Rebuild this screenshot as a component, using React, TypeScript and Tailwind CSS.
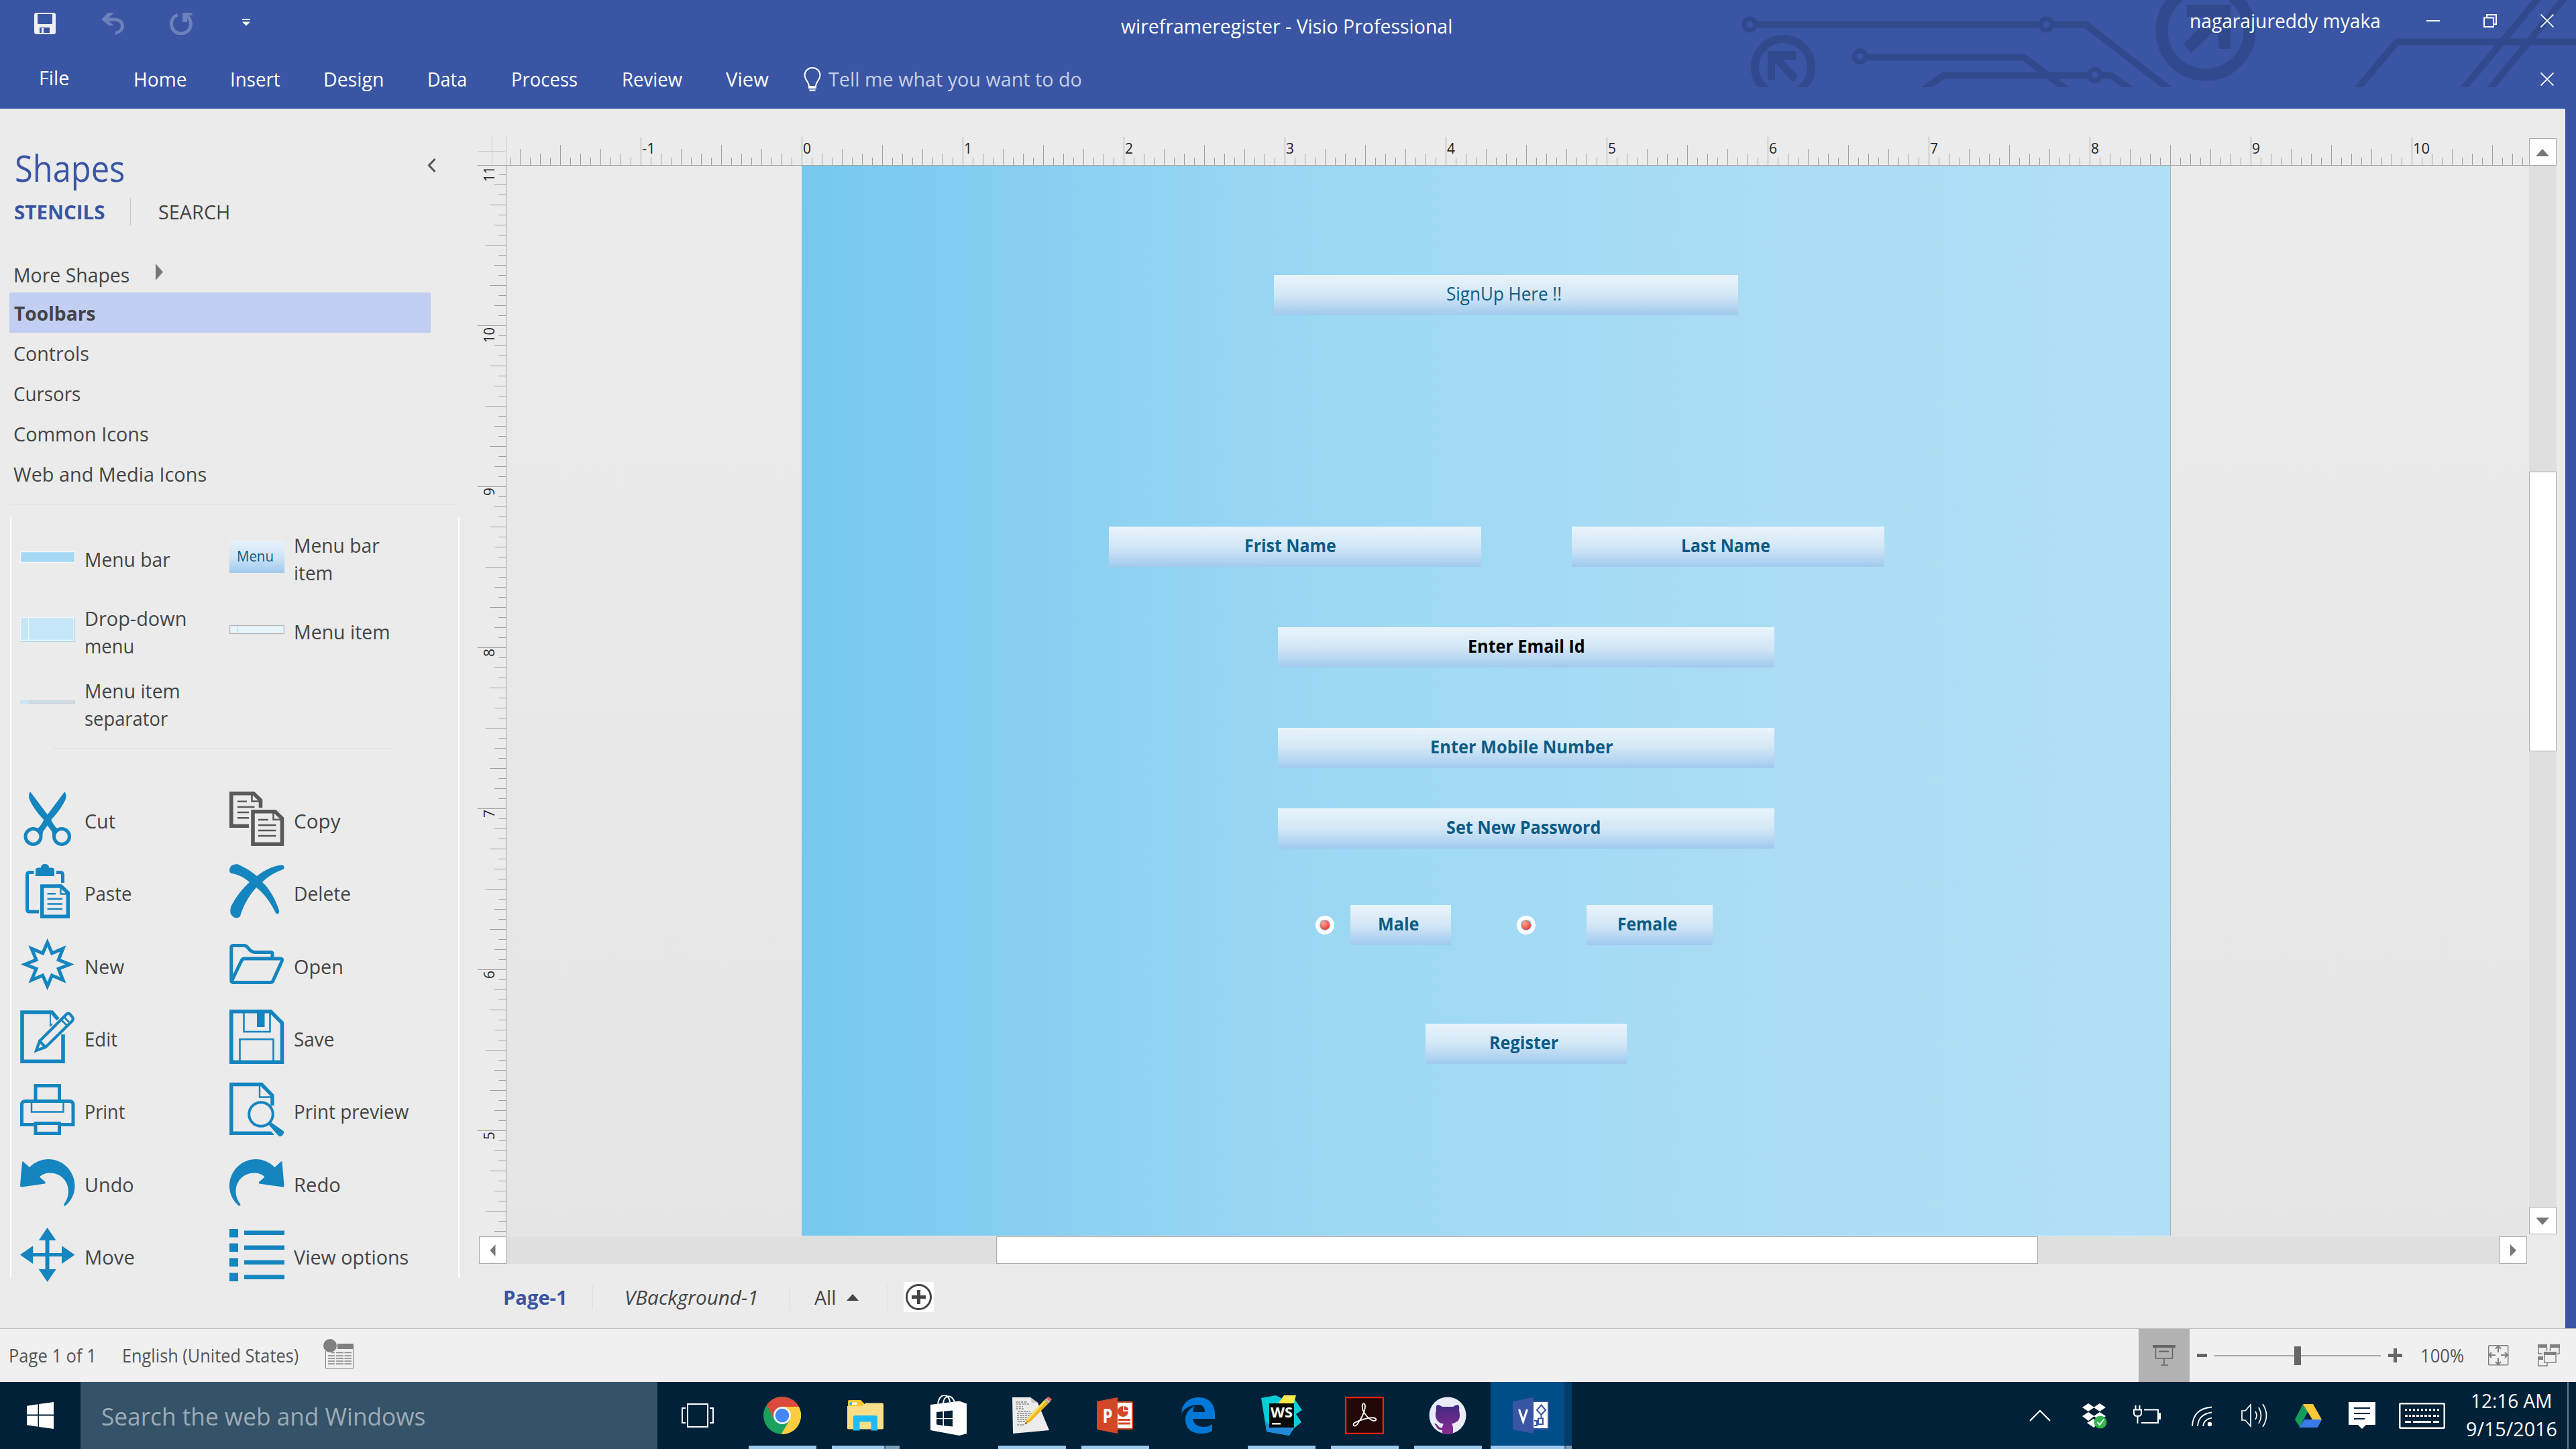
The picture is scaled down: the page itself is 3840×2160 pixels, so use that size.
import { useLayoutEffect, useRef, useState, type ReactNode } from "react";

/** Text squeezed or stretched horizontally to an exact advance width. */
function T({ w, className = "", children }: { w: number; className?: string; children: string }) {
  const ref = useRef<HTMLSpanElement>(null);
  const [scale, setScale] = useState(1);
  useLayoutEffect(() => {
    if (ref.current) setScale((w - 2.5) / ref.current.offsetWidth);
  }, [w]);
  return (
    <span className={`block shrink-0 whitespace-nowrap pl-[1.25px] ${className}`} style={{ width: w }}>
      <span ref={ref} className="inline-block origin-left" style={{ transform: `scaleX(${scale})` }}>
        {children}
      </span>
    </span>
  );
}

function Svg({ w, h, className = "", children }: { w: number; h: number; className?: string; children: ReactNode }) {
  return (
    <svg width={w} height={h} viewBox={`0 0 ${w} ${h}`} fill="none" className={`block shrink-0 ${className}`}>
      {children}
    </svg>
  );
}

/* ---------- Title bar ---------- */

function Circuit() {
  return (
    <svg width="1340" height="130" viewBox="2500 0 1340 130" fill="none" className="absolute top-0 left-[2500px]">
      <g stroke="#31498d" strokeWidth="10" strokeLinejoin="round">
        <path d="M2620 36.500H3040M3061 36.500H3109L3235 134" />
        <circle cx="2608.500" cy="36.500" r="8.500" strokeWidth="7" />
        <circle cx="3050.500" cy="36.500" r="8.500" strokeWidth="7" />
        <path d="M2784 85.500H3017L3084 136" />
        <circle cx="2772.500" cy="84" r="8.500" strokeWidth="7" />
        <path d="M2864 136L2897 112.500H3112M3134 112.500H3147L3180 136" />
        <circle cx="3123" cy="112" r="8.500" strokeWidth="7" />
        <circle cx="2658" cy="100" r="42" strokeWidth="12" />
        <circle cx="3288" cy="46" r="65.500" strokeWidth="18" />
        <path d="M3510 137L3573 62.500H3840" />
        <path d="M3668 137L3784 -3M3708 137L3823 -3" />
      </g>
      <path fill="#31498d" d="M2635 76H2677V89H2656.500L2680 113L2673.500 123L2646 93.500V119.500H2635Z" />
      <path fill="#31498d" d="M3260 7H3325V73H3307V40L3266.500 79L3255 66L3294.500 25H3260Z" />
    </svg>
  );
}

function CloseX() {
  return (
    <Svg w={20} h={20}>
      <path d="M0.500 0.500L19.500 19.500M19.500 0.500L0.500 19.500" stroke="#fff" strokeWidth="1.800" />
    </Svg>
  );
}

function Header() {
  return (
    <header className="relative h-[162px] shrink-0 bg-[#3955a3] text-[29px] leading-[40px] text-white">
      <Circuit />
      <div className="relative flex h-[62px] items-center">
        <Svg w={32} h={32} className="mt-2 ml-[51px]">
          <path fill="#f0f0f0" fillRule="evenodd" d="M2 0H30L32 2V30L30 32H2L0 30V2ZM5 2V16L6 17H26L27 16V2ZM8 22V30H11V23H14V30H23V22Z" />
        </Svg>
        <Svg w={34} h={33} className="mt-2 ml-[68px]">
          <path fill="#6c80bc" d="M10 0H19L11 7.500H19C29 7.500 34 13 34 20C34 26 29 31 21 33V28C26 27 29 24 29 20C29 15 25 12.500 19 12.500H11L19 19H11L0 10Z" />
        </Svg>
        <Svg w={35} h={33} className="mt-2 ml-[67px]">
          <path d="M13 3A14.500 14.500 0 1 0 25 4" stroke="#6c80bc" strokeWidth="5" />
          <path fill="#6c80bc" d="M20 0H33L36 4H27V14H20Z" />
        </Svg>
        <Svg w={12} h={11} className="mt-1 ml-[74px]">
          <path fill="#fff" d="M0 0H12V2H0ZM0 4.500H12L6 10.500Z" />
        </Svg>
        <T w={497} className="mt-[15px] ml-[1297px]">wireframeregister - Visio Professional</T>
        <T w={287} className="ml-[1096px]">nagarajureddy myaka</T>
        <div className="ml-[67px] h-[2px] w-[20px] bg-white" />
        <Svg w={20} h={20} className="ml-[65px]">
          <path d="M1 5.500H15V19H1ZM5 5V1H19V15H15.500" stroke="#fff" strokeWidth="2" />
        </Svg>
        <div className="ml-[65px]">
          <CloseX />
        </div>
      </div>
      <div className="relative flex h-[100px] items-center pt-[12px]">
        <T w={48} className="mb-1 ml-[57px]">File</T>
        <T w={82} className="ml-[93px]">Home</T>
        <T w={77} className="ml-[62px]">Insert</T>
        <T w={93} className="ml-[62px]">Design</T>
        <T w={62} className="ml-[62px]">Data</T>
        <T w={102} className="ml-[63px]">Process</T>
        <T w={93} className="ml-[63px]">Review</T>
        <T w={66} className="ml-[62px]">View</T>
        <Svg w={26} h={37} className="ml-[51px]">
          <path d="M8 29C8 22 1.500 19 1.500 12A11.500 11 0 0 1 24.500 12C24.500 19 18 22 18 29Z" stroke="#fff" strokeWidth="2" />
          <path fill="#fff" d="M7 28H19V32H7ZM8.500 33.500H17.500V36H8.500Z" />
        </Svg>
        <T w={380} className="ml-[10px] text-[#c6cfe6]">Tell me what you want to do</T>
        <div className="mr-[33px] ml-auto">
          <CloseX />
        </div>
      </div>
    </header>
  );
}

/* ---------- Shapes panel ---------- */

const BLUE = "#1585bf";

function StencilIcon({ name }: { name: string }) {
  const page = "#ebebeb";
  switch (name) {
    case "menubar":
      return (
        <Svg w={82} h={81}>
          <rect x="0.500" y="32.500" width="81" height="16" fill="#a4d8f3" stroke="#f4f8fa" strokeWidth="1.500" />
        </Svg>
      );
    case "menubaritem":
      return (
        <div className="flex h-[81px] w-[82px] shrink-0 items-center">
          <div className="flex h-[48px] w-[82px] items-center justify-center bg-linear-to-b from-[#e6f2fb] via-[#d0e4f6] to-[#9ecaee] pr-[5px] pb-[2px] text-[21px] leading-[30px] text-[#0b5c85]">
            <T w={57}>Menu</T>
          </div>
        </div>
      );
    case "dropdown":
      return (
        <Svg w={82} h={81}>
          <rect x="0" y="22" width="82" height="37" fill="#c5e6f7" />
          <path d="M0.500 58V22.500H80V56.500H0.500M12.500 23V56" stroke="#eef7fc" strokeWidth="1.300" />
          <path d="M1 58.500H81.500V23" stroke="#a9d6ee" />
        </Svg>
      );
    case "menuitem":
      return (
        <Svg w={82} h={81}>
          <rect x="0.500" y="34.500" width="81" height="12" fill="#e7f4fc" stroke="#b4b4b8" strokeWidth="1.300" />
          <path d="M12 35V46" stroke="#a4d8f3" />
        </Svg>
      );
    case "separator":
      return (
        <Svg w={82} h={81}>
          <rect x="0.500" y="38.500" width="81" height="4" fill="#e2e6ea" stroke="#d2d2d2" />
          <rect x="0" y="38" width="12" height="5" fill="#c5e6f7" />
          <path d="M13 40.500H82" stroke="#7cc0e4" />
        </Svg>
      );
    case "cut": {
      const half = "M15 0C12.500 4 12.500 8 14 12C20 25 28 34 36 43L30 53L34 60L41 50L50 62L56 56C52 52 49 48 46.500 43C47 42 42 35 40.500 34Z";
      return (
        <Svg w={82} h={81}>
          <g fill={BLUE}>
            <path d={half} />
            <path d={half} transform="matrix(-1 0 0 1 81.5 0)" />
          </g>
          <path d="M30 53C33 57 31 63 30.500 66M51.500 53C48.500 57 50.500 63 51 66" stroke={BLUE} strokeWidth="5" />
          <ellipse cx="19.500" cy="67" rx="11.500" ry="11.500" stroke={BLUE} strokeWidth="5" fill={page} />
          <ellipse cx="62" cy="67" rx="11.500" ry="11.500" stroke={BLUE} strokeWidth="5" fill={page} />
        </Svg>
      );
    }
    case "copy":
      return (
        <Svg w={82} h={81}>
          <g stroke="#595959">
            <path d="M29 51.300H2.800V2.800H36L46.500 13V24" strokeWidth="5.600" />
            <path d="M35 29.800H68L78.500 40V78.300H35Z" strokeWidth="5.600" />
            <path d="M33.500 4V14.500H47M65.500 31V41.800H78M12 14.700H26M12 23H37.500M12 31H29M12 39.300H29M43 42H58M43 50H69.500M43 58H69.500M43 66H69.500" strokeWidth="2.600" />
          </g>
        </Svg>
      );
    case "paste":
      return (
        <Svg w={82} h={81}>
          <path fill={BLUE} d="M23 18V9Q23 5.500 27 5.500H31Q31 0 37 0Q43 0 43 5.500H47Q51 5.500 51 9V18Z" />
          <g stroke={BLUE}>
            <path d="M20.500 12.500H14Q10.500 12.500 10.500 16V68Q10.500 71 14 71H28M54 12.500H60Q63.500 12.500 63.500 16V28" strokeWidth="5" />
            <path d="M32.700 33H61L71.300 43V78.300H32.700Z" strokeWidth="5.400" />
            <path d="M60.500 34V44.500H72M40.600 44.300H53M40.600 52H63M40.600 59.500H63M40.600 67H63" strokeWidth="2.400" />
          </g>
        </Svg>
      );
    case "delete":
      return (
        <Svg w={82} h={81}>
          <path fill={BLUE} d="M0 9C0 3 6 -1 13 0.500C23 5 33 11 41 18C52 9 65 3 77 1.500C82 1 83 6 80 8C68 12 57 19 49 27C61 38 69 54 74 69C75 75 71 75.500 69 73C62 58 52 44 40 35C29 47 20 63 16 78C13 81.500 8 81.500 4 77C0 73 1 67 3 62C9 50 19 37 30 27C22 20 12 15 3 14C1 13 0 12 0 9Z" />
        </Svg>
      );
    case "new":
      return (
        <Svg w={82} h={81}>
          <path
            d="M40.600 8L47.500 24L64 17L57.200 33.800L74 40.500L57.200 47.200L64 64L47.500 57L40.600 73L33.700 57L17 64L24 47.200L7.500 40.500L24 33.800L17 17L33.700 24Z"
            stroke={BLUE}
            strokeWidth="5"
            strokeMiterlimit="10"
          />
        </Svg>
      );
    case "open":
      return (
        <Svg w={82} h={81}>
          <path
            d="M2.800 64V15.500Q2.800 12.500 6 12.500H22C29 12.500 28 22.500 38 22.500H61Q64 22.500 64 25V32M3 66L18 35Q19.500 32 22.500 32H76Q79.500 32 78.500 35L65 65Q64 67.500 61 67.500H5Q2.500 67.500 3 64"
            stroke={BLUE}
            strokeWidth="5"
          />
        </Svg>
      );
    case "edit":
      return (
        <Svg w={82} h={81}>
          <g stroke={BLUE}>
            <path d="M56.500 14.500L47.500 4H3V77.300H64V37" strokeWidth="5.600" />
            <path d="M45 5V24L48 21" strokeWidth="1.800" />
            <path d="M24 61L29 47L69 7Q72 4 75 7.500L78 11.500Q80 14 77.500 17L38 56ZM29 47L38 56" strokeWidth="4.200" />
            <path d="M61 15L70 24M65.500 11L74 20" strokeWidth="2.600" />
          </g>
        </Svg>
      );
    case "save":
      return (
        <Svg w={82} h={81}>
          <g stroke={BLUE}>
            <path d="M2.800 2.800H61.500L78.500 20V78.200H2.800Z" strokeWidth="5.600" />
            <path d="M21.500 4V33H60.500V4M15.500 78V44.300H65.500V78" strokeWidth="2.600" />
          </g>
          <rect x="41" y="3" width="11.500" height="23" fill={BLUE} />
        </Svg>
      );
    case "print":
      return (
        <Svg w={82} h={81}>
          <g stroke={BLUE} strokeWidth="5">
            <path d="M23 27V5.500H58.500V27M21 63.500H2.500V34Q2.500 28.500 8 28.500H73Q79 28.500 79 34V63.500H60" />
            <path d="M23 61.500H58.500V76.500H23Z" />
            <path d="M17 30V44.500H64.500V30" strokeWidth="2.500" />
          </g>
        </Svg>
      );
    case "preview":
      return (
        <Svg w={82} h={81}>
          <g stroke={BLUE}>
            <path d="M64 35V20L48 3.500H2.800V76.200H66" strokeWidth="5.400" />
            <path d="M45 5V22.500H62" strokeWidth="2.400" />
          </g>
          <path d="M58 60L78 82" stroke={page} strokeWidth="12" />
          <circle cx="47" cy="48" r="17.800" stroke={BLUE} strokeWidth="4" fill={page} />
          <path fill={BLUE} d="M58 63L62 60L80.500 73Q82 75 80 78L77.500 80.500Q75 82 73 80Z" />
        </Svg>
      );
    case "undo":
    case "redo":
      return (
        <Svg w={82} h={81}>
          <path
            fill={BLUE}
            transform={name === "redo" ? "matrix(-1 0 0 1 81.5 0)" : undefined}
            d="M3 10Q4 8.500 5 10L14 18C22 10 32 6 42 6C64 6 81.500 24 81.500 46C81.500 58 76 68 68 75Q65 76.500 65 73.500C70 67 72 60 72 54C72 39 61 26.500 44 26.500C38 26.500 32 29 29 32.500L37.500 40Q38 42 37 42.500L2 47.500Q0 47.500 0 45Z"
          />
        </Svg>
      );
    case "move":
      return (
        <Svg w={82} h={81}>
          <path
            fill={BLUE}
            d="M40.600 0L53.600 19H43.500V38H62V27L81.500 40.500L62 54V43H43.500V62H53.600L40.600 81L27.700 62H37.500V43H19.200V54L0 40.500L19.200 27V38H37.500V19H27.700Z"
          />
        </Svg>
      );
    default:
      return (
        <Svg w={82} h={81}>
          <path
            fill={BLUE}
            d="M0 2H13V14.500H0ZM0 23.500H13V36H0ZM0 45.500H13V58H0ZM0 67.500H13V80H0ZM22 4.500H82V11H22ZM22 26.500H82V33H22ZM22 48.500H82V55H22ZM22 70.500H82V77H22Z"
          />
        </Svg>
      );
  }
}

type Line = [string, number];
type Stencil = { icon: string; lines: Line[] };

const menuStencils: (Stencil | null)[] = [
  { icon: "menubar", lines: [["Menu bar", 130]] },
  { icon: "menubaritem", lines: [["Menu bar", 130], ["item", 61]] },
  { icon: "dropdown", lines: [["Drop-down", 155], ["menu", 77]] },
  { icon: "menuitem", lines: [["Menu item", 146]] },
  { icon: "separator", lines: [["Menu item", 145], ["separator", 127]] },
  null,
];

const toolStencils: (Stencil | null)[] = [
  { icon: "cut", lines: [["Cut", 48]] },
  { icon: "copy", lines: [["Copy", 72]] },
  { icon: "paste", lines: [["Paste", 73]] },
  { icon: "delete", lines: [["Delete", 88]] },
  { icon: "new", lines: [["New", 62]] },
  { icon: "open", lines: [["Open", 76]] },
  { icon: "edit", lines: [["Edit", 52]] },
  { icon: "save", lines: [["Save", 63]] },
  { icon: "print", lines: [["Print", 63]] },
  { icon: "preview", lines: [["Print preview", 174]] },
  { icon: "undo", lines: [["Undo", 76]] },
  { icon: "redo", lines: [["Redo", 72]] },
  { icon: "move", lines: [["Move", 77]] },
  { icon: "view", lines: [["View options", 174]] },
];

function StencilGrid({ items }: { items: (Stencil | null)[] }) {
  return (
    <div className="grid auto-rows-[108.4px] grid-cols-[312px_312px] pl-[13px] text-[29px] leading-[41px]">
      {items.map((s, i) =>
        s ? (
          <div key={i} className="flex items-center">
            <StencilIcon name={s.icon} />
            <div className="ml-[12.5px] flex flex-col pt-[6px]">
              {s.lines.map(([text, w]) => (
                <T key={text} w={w}>{text}</T>
              ))}
            </div>
          </div>
        ) : (
          <div key={i} />
        ),
      )}
    </div>
  );
}

const stencilNames: Line[] = [
  ["Controls", 115],
  ["Cursors", 103],
  ["Common Icons", 204],
  ["Web and Media Icons", 291],
];

function ShapesPanel() {
  return (
    <aside className="flex w-[712px] shrink-0 flex-col pt-[53px] text-[29px] leading-[40px] text-[#444444]">
      <div className="flex h-[69px] items-center">
        <T w={167} className="ml-[21px] pt-[2px] text-[54px] leading-[69px] text-[#3955a3]">Shapes</T>
        <Svg w={13} h={21} className="mb-[7px] ml-[449px]">
          <path d="M11.500 1L2.500 10.500L11.500 20" stroke="#555" strokeWidth="3" />
        </Svg>
      </div>
      <div className="flex h-[63px] items-center">
        <T w={138} className="ml-[20px] font-bold text-[#3955a3]">STENCILS</T>
        <div className="ml-[36px] h-[41px] w-px bg-[#c6c6c6]" />
        <T w={110} className="ml-[40px]">SEARCH</T>
      </div>
      <div className="mt-[35px] flex h-[54px] items-center">
        <T w={176} className="ml-[19px] pt-[2px]">More Shapes</T>
        <Svg w={11} h={25} className="mb-[7px] ml-[37px]">
          <path fill="#777" d="M0 0L11 12.500L0 25Z" />
        </Svg>
      </div>
      <div className="ml-[14px] flex h-[60px] w-[628px] items-center bg-[#c2cef2] pt-[2px] pl-[6px] font-bold">
        <T w={124}>Toolbars</T>
      </div>
      {stencilNames.map(([name, w]) => (
        <div key={name} className="flex h-[60px] items-center pt-[2px] pl-[19px]">
          <T w={w}>{name}</T>
        </div>
      ))}
      <div className="mt-[15px] ml-[14px] h-px w-[671px] bg-[#dfdfdf]" />
      <div className="mt-[19px] ml-[15px] h-[1134px] w-[670px] border-x-2 border-white pt-[5px]">
        <StencilGrid items={menuStencils} />
        <div className="mt-[14px] mb-[50px] ml-[62px] h-px w-[504px] bg-[#dfdfdf]" />
        <StencilGrid items={toolStencils} />
      </div>
    </aside>
  );
}

/* ---------- Drawing window ---------- */

function tickLength(k: number) {
  const m = ((k % 16) + 16) % 16;
  if (m === 0) return 42;
  if (m === 8) return 30;
  if (m % 4 === 0) return 24;
  if (m % 2 === 0) return 17;
  return 11;
}

function HorizontalRuler() {
  const ticks = Array.from({ length: 201 }, (_, i) => i - 29);
  const labels = Array.from({ length: 12 }, (_, i) => i - 1);
  return (
    <Svg w={3015} h={43}>
      {ticks.map((k) => (
        <rect key={k} x={440 + k * 15} y={42 - tickLength(k)} width="1" height={tickLength(k)} fill="#a0a0a0" />
      ))}
      {labels.map((n) => (
        <text key={n} x={442 + n * 240} y="25" fontSize="22" fill="#262626" textLength={n < 0 ? 20 : n > 9 ? 25 : 12} lengthAdjust="spacingAndGlyphs">
          {n}
        </text>
      ))}
      <rect x="0" y="42" width="3015" height="1" fill="#a6a6a6" />
    </Svg>
  );
}

function VerticalRuler() {
  const ticks = Array.from({ length: 106 }, (_, i) => i + 1);
  const labels = [11, 10, 9, 8, 7, 6, 5];
  return (
    <Svg w={43} h={1595}>
      {ticks.map((k) => (
        <rect key={k} x={42 - tickLength(k)} y={-2 + k * 15} width={tickLength(k)} height="1" fill="#a0a0a0" />
      ))}
      {labels.map((n, i) => (
        <text
          key={n}
          transform={`translate(25 ${i * 240 + (n > 9 ? 24 : 12)}) rotate(-90)`}
          fontSize="22"
          fill="#262626"
          textLength={n > 9 ? 23 : 12}
          lengthAdjust="spacingAndGlyphs"
        >
          {n}
        </text>
      ))}
      <rect x="42" y="0" width="1" height="1595" fill="#a6a6a6" />
    </Svg>
  );
}

function Field({ label, w, className }: { label: string; w: number; className: string }) {
  return (
    <div className={`absolute flex h-[60px] items-center justify-center bg-linear-to-b from-[#e9f4fb] via-[#d3e7f6] to-[#a0caee] pb-[4px] text-[27px] leading-[40px] ${className}`}>
      <T w={w}>{label}</T>
    </div>
  );
}

function Radio({ className }: { className: string }) {
  return (
    <Svg w={32} h={32} className={`absolute ${className}`}>
      <defs>
        <radialGradient id="radio-dot" cx="0.35" cy="0.3" r="0.8">
          <stop offset="0" stopColor="#f9a79c" />
          <stop offset="1" stopColor="#ee3224" />
        </radialGradient>
      </defs>
      <circle cx="16" cy="16" r="14" fill="#fff" />
      <circle cx="16" cy="16" r="8" fill="#7fc4e6" />
      <circle cx="16" cy="16" r="7" fill="url(#radio-dot)" />
    </Svg>
  );
}

function PageCanvas() {
  return (
    <div className="relative h-[1595px] w-[3014px] overflow-hidden bg-linear-to-b from-[#ebebeb] to-[#e5e5e5]">
      <div className="absolute top-0 left-[440px] h-full w-[2041px] border-r border-[#9fb6c4] bg-[linear-gradient(90deg,#76c8ef_0%,#80ccf1_10%,#8bd1f2_20%,#9ad6f3_35%,#a2daf4_50%,#abddf4_70%,#b1dff6_100%)] text-[#0b5c85]">
        <Field label="SignUp Here !!" w={175} className="top-[163px] left-[704px] w-[692px] pr-[5px]" />
        <Field label="Frist Name" w={139} className="top-[538px] left-[458px] w-[555px] pr-[14px] font-bold" />
        <Field label="Last Name" w={135} className="top-[538px] left-[1148px] w-[466px] pr-[8px] font-bold" />
        <Field label="Enter Email Id" w={177} className="top-[688px] left-[710px] w-[740px] font-bold text-black" />
        <Field label="Enter Mobile Number" w={275} className="top-[838px] left-[710px] w-[740px] pr-[13px] font-bold" />
        <Field label="Set New Password" w={233} className="top-[958px] left-[710px] w-[740px] pr-[8px] font-bold" />
        <Radio className="top-[1116px] left-[764px]" />
        <Field label="Male" w={64} className="top-[1102px] left-[818px] w-[150px] pr-[7px] font-bold" />
        <Radio className="top-[1116px] left-[1064px]" />
        <Field label="Female" w={92} className="top-[1102px] left-[1170px] w-[188px] pr-[6px] font-bold" />
        <Field label="Register" w={106} className="top-[1279px] left-[930px] w-[300px] pr-[6px] font-bold" />
      </div>
    </div>
  );
}

function ArrowButton({ d }: { d: string }) {
  return (
    <div className="flex h-[41px] w-[41px] shrink-0 items-center justify-center border border-[#ababab] bg-white">
      <Svg w={20} h={20}>
        <path d={d} fill="#777" />
      </Svg>
    </div>
  );
}

function PageTabs() {
  const separator = <div className="h-[37px] w-px bg-[#dedede]" />;
  return (
    <div className="flex h-[96px] items-center pt-[3px] text-[29px] leading-[40px] text-[#444444]">
      <T w={98} className="ml-[37px] font-bold text-[#3955a3]">Page-1</T>
      <div className="ml-[36px]">{separator}</div>
      <T w={202} className="ml-[46px] italic">VBackground-1</T>
      <div className="ml-[44px]">{separator}</div>
      <T w={35} className="ml-[36px]">All</T>
      <Svg w={18} h={10} className="ml-[14px]">
        <path fill="#444" d="M9 0L18 10H0Z" />
      </Svg>
      <div className="ml-[43px]">{separator}</div>
      <Svg w={45} h={45} className="ml-[23px] bg-white">
        <circle cx="22.500" cy="22.500" r="18" stroke="#444" strokeWidth="3" />
        <path d="M22.500 12V33M12 22.500H33" stroke="#444" strokeWidth="5" />
      </Svg>
    </div>
  );
}

function DrawingWindow() {
  return (
    <main className="flex w-[3112px] shrink-0 pt-[42px]">
      <div className="w-[3058px] shrink-0">
        <div className="flex h-[43px]">
          <Svg w={43} h={43}>
            <path d="M21.500 0V41M1 21.500H41" stroke="#c8c8c8" />
            <path d="M42.500 0V42" stroke="#c8c8c8" />
            <path d="M0 42.500H43" stroke="#a6a6a6" />
          </Svg>
          <HorizontalRuler />
        </div>
        <div className="flex h-[1595px]">
          <VerticalRuler />
          <PageCanvas />
        </div>
        <div className="mt-[1px] ml-[2px] flex h-[41px] w-[3053px] bg-[#dfdfdf]">
          <ArrowButton d="M13.500 1V19L5.500 10Z" />
          <div className="ml-[730px] h-[41px] w-[1553px] border border-[#ababab] bg-white" />
          <div className="ml-auto">
            <ArrowButton d="M5 1V19L14 10Z" />
          </div>
        </div>
        <PageTabs />
      </div>
      <div className="mt-[2px] flex h-[1634px] w-[41px] flex-col bg-[#dfdfdf]">
        <ArrowButton d="M-1 16L9 5L19 16Z" />
        <div className="mt-[456px] h-[417px] w-[41px] border border-[#ababab] bg-white" />
        <div className="mt-auto">
          <ArrowButton d="M-1 5L9 16L19 5Z" />
        </div>
      </div>
    </main>
  );
}

/* ---------- Status bar ---------- */

function StatusBar() {
  return (
    <div className="flex h-[80px] shrink-0 items-center border-t border-[#bfbfbf] bg-[#f0f0f0] text-[27px] leading-[40px] text-[#555]">
      <T w={133} className="ml-[12px]">Page 1 of 1</T>
      <T w={266} className="ml-[36px]">English (United States)</T>
      <Svg w={46} h={45} className="mb-[4px] ml-[35px]">
        <path d="M3.500 18V43.500H44.500V14" stroke="#808080" />
        <rect x="21" y="7" width="24" height="8" fill="#808080" />
        <circle cx="10" cy="10" r="10" fill="#808080" />
        <path d="M12 20.500H17M19 20.500H30M31.500 20.500H42M7 25H17M19 25H30M31.500 25H42M7 29H17M19 29H30M31.500 29H42M7 33H17M19 33H30M31.500 33H42M7 37H17M19 37H30M31.500 37H42" stroke="#808080" strokeWidth="1.300" />
      </Svg>
      <div className="ml-auto flex h-[79px] w-[76px] items-center justify-center bg-[#b2b2b2]">
        <Svg w={34} h={31}>
          <path fill="#666" d="M0 0H34V4H0ZM9 8.500H24V10.500H9Z" />
          <path d="M4.500 4V20H29.500V4M17 20V30M12 30H23" stroke="#666" strokeWidth="1.600" />
        </Svg>
      </div>
      <div className="ml-[11px] h-[5px] w-[15px] bg-[#666]" />
      <div className="ml-[11px] flex h-[28px] w-[248px] items-center">
        <div className="h-[2px] w-[119px] bg-[#a8a8a8]" />
        <div className="h-[28px] w-[10px] bg-[#666]" />
        <div className="h-[2px] w-[119px] bg-[#a8a8a8]" />
      </div>
      <Svg w={21} h={21} className="ml-[11px]">
        <path d="M10.500 0V21M0 10.500H21" stroke="#666" strokeWidth="5" />
      </Svg>
      <T w={68} className="ml-[26px]">100%</T>
      <Svg w={31} h={31} className="ml-[34px]">
        <rect x="0.750" y="0.750" width="29" height="29" rx="1" stroke="#808080" strokeWidth="1.500" />
        <path d="M15 11V2M11 5.500L15 1.500L19 5.500M15 19V28M11 25L15 29L19 25M11 15H2M5 11L1.500 15L5 19M19 15H28M25 11L29 15L25 19" stroke="#808080" strokeWidth="2" />
      </Svg>
      <Svg w={33} h={33} className="mr-[24px] ml-[43px]">
        <path fill="#808080" d="M0 0H14V5H0ZM18 0H33V5H18ZM9 11H28V16H9ZM0 18H8V23H0Z" />
        <path d="M0.750 5V14H7M32 5V14H29M13.500 5V10M18.500 5V10M9.750 16V27H27V16M0.750 23V32H14V28" stroke="#808080" strokeWidth="1.500" />
      </Svg>
    </div>
  );
}

/* ---------- Taskbar ---------- */

function AppIcon({ name }: { name: string }) {
  switch (name) {
    case "taskview":
      return (
        <Svg w={52} h={36}>
          <path d="M9 1H39V35H9ZM6 7H1V29H6M42 7H47V29H42" stroke="#fff" strokeWidth="2" />
        </Svg>
      );
    case "chrome":
      return (
        <Svg w={56} h={56}>
          <circle cx="28" cy="28" r="28" fill="#1ba15e" />
          <path fill="#db4b3c" d="M28 15H52.900A28 28 0 0 0 5 12.500L16.700 34.500Z" />
          <path fill="#fecc3f" d="M28 15H52.900A28 28 0 0 1 26.500 56L39.300 34.500Z" />
          <circle cx="28" cy="28" r="13" fill="#f5f5f5" />
          <circle cx="28" cy="28" r="10.300" fill="#4587f3" />
        </Svg>
      );
    case "explorer":
      return (
        <Svg w={54} h={46}>
          <path fill="#fbc630" d="M1 2Q1 0 3 0H20L25 5V10H1Z" />
          <path fill="#fddf88" d="M0 9H22L27 4.500H52Q54 4.500 54 6.500V42Q54 43.500 52 43.500H2Q0 43.500 0 42Z" />
          <rect x="4" y="3.500" width="11" height="3.500" fill="#fff" />
          <rect x="4" y="3.500" width="3" height="3.500" fill="#12b4f5" />
          <path fill="#1cbcf6" d="M9 45.500V26Q9 23 12 23H42Q45 23 45 26V45.500H35.500V32.500H18.500V45.500Z" />
        </Svg>
      );
    case "store":
      return (
        <Svg w={54} h={60}>
          <path d="M11 15C11 -2 27 -6 29 10M19 12C20 0 31 -3 36 10" stroke="#fff" strokeWidth="2" />
          <path fill="#fff" d="M0 14L43 8.500L54 12.500V57L43 60L0 52Z" />
          <path fill="#002137" d="M9 25L18.500 24V34H9ZM20 23.700L33 22.500V34H20ZM9 35.300H18.500V45L9 43.500ZM20 35.300H33V46.500L20 45.200Z" />
        </Svg>
      );
    case "notepad":
      return (
        <Svg w={60} h={56}>
          <path fill="#ececec" d="M1 1H28L39 9L56 50L2 55Z" />
          <path fill="#c9c9c9" d="M28 1L39 9L30 9Z" />
          <path d="M6 8H23M7 11H26M7 15H17M7 18H18M10 22H28M8 25H30M8 28H32M8 31H33M8 34H30M9 37H25M8 42H20" stroke="#8b8b8b" strokeWidth="1.400" strokeDasharray="3 1" />
          <path fill="#f0b41e" d="M22 34L49 5L55 10L27 38L20 41Z" />
          <path fill="#fbe05a" d="M22 34L49 5L51 7L24 36Z" />
          <path fill="#b9b9b9" d="M49 5L52 2L58 7L55 10Z" />
          <path fill="#e7645c" d="M52 2L55 0L60 4L58 7Z" />
          <path fill="#333" d="M20 41L21 38L23 40Z" />
        </Svg>
      );
    case "powerpoint":
      return (
        <Svg w={54} h={54}>
          <rect x="28" y="7" width="25" height="40" rx="1" fill="#fff" stroke="#d24726" strokeWidth="2" />
          <path fill="#d24726" d="M0 6L31 0V54L0 48ZM32 32H50V35H32ZM32 37.500H50V40.500H32Z" />
          <circle cx="39" cy="21" r="8" fill="#d24726" />
          <path fill="#fff" d="M39 21V12H48V21Z" />
          <path fill="#d24726" d="M41 19V13Q47 14 47 19Z" />
          <path d="M12.500 38V19H16Q20.500 19 20.500 24Q20.500 29 16 29H13" stroke="#fff" strokeWidth="4" />
        </Svg>
      );
    case "edge":
      return (
        <Svg w={51} h={54}>
          <path
            fill="#0078d7"
            d="M0 24C1 9 11 0 26 0C42 0 50 11 50 25V32H17C18 40 25 44 33 44C39 44 42 42.500 46 40V50C41 53 36 54 29 54C15 54 6 46 6 33C6 24 12 17 20 13C18 16 17.500 19 17.500 22H35C35 15 32 11 25 11C14 11 5 16 0 24Z"
          />
        </Svg>
      );
    case "webstorm":
      return (
        <div className="relative">
          <Svg w={61} h={60}>
            <path fill="#08cdd7" d="M0 4L22 0L33 6L46 0L61 22L52 28L60 40L48 50L42 60L8 54Z" />
            <path fill="#2089d8" d="M6 38L14 46H48L42 60L8 54Z" />
            <path fill="#f6ea4c" d="M24 14L34 0H52L48 14Z" />
            <path fill="#0a0a0a" d="M12 12H49V48H12Z" />
            <rect x="16" y="41" width="13" height="2.500" fill="#fff" />
          </Svg>
          <span className="absolute top-[13px] left-[13px] text-[22px] leading-[22px] font-bold text-white">
            <T w={35}>WS</T>
          </span>
        </div>
      );
    case "acrobat":
      return (
        <Svg w={58} h={56}>
          <rect x="1" y="1" width="56" height="54" fill="#220706" stroke="#f02010" strokeWidth="2.500" />
          <path
            d="M26 12C24 20 31 29 38 34C44 38 48 35 45.500 32.500C41 29.500 26 33 14 39C10.500 42 14 46 17.500 42C24 34 30 22 30 14C30 10 27 9.500 26 12Z"
            stroke="#fff"
            strokeWidth="1.800"
          />
        </Svg>
      );
    case "github":
      return (
        <Svg w={56} h={56}>
          <defs>
            <linearGradient id="cat" x1="0" y1="0" x2="0" y2="1">
              <stop offset="0" stopColor="#402a80" />
              <stop offset="1" stopColor="#8b2a92" />
            </linearGradient>
          </defs>
          <circle cx="28" cy="28" r="27.500" fill="#e9ecf8" />
          <path
            fill="url(#cat)"
            d="M12 12Q16 12 20 15H36Q40 12 44 12Q46 16 45 20Q48 33 42 37Q38 40 34 40.500Q36 43 36 46V54Q28 57 20 54V50Q13 50 11 44Q9 42 8 40Q12 40 14 44Q16 47 20 46Q20 43 22 40.500Q16 40 13 36Q8 30 11 20Q10 16 12 12Z"
          />
        </Svg>
      );
    default:
      return (
        <Svg w={54} h={54}>
          <rect x="28" y="6" width="25" height="41" rx="1" fill="#fff" stroke="#3955a3" strokeWidth="2" />
          <path fill="#3955a3" d="M0 6L31 0V54L0 48Z" />
          <path d="M9.500 18L15.500 36L21.500 18" stroke="#fff" strokeWidth="3.200" />
          <path d="M42.500 11.500L49 19L42.500 26L36 19ZM42.500 26V31M38 31.500H45V40H38ZM32 35H36V42H32" stroke="#3955a3" strokeWidth="2" />
        </Svg>
      );
  }
}

const apps: { name: string; open?: boolean }[] = [
  { name: "taskview" },
  { name: "chrome", open: true },
  { name: "explorer" },
  { name: "store" },
  { name: "notepad", open: true },
  { name: "powerpoint", open: true },
  { name: "edge" },
  { name: "webstorm", open: true },
  { name: "acrobat", open: true },
  { name: "github", open: true },
];

function Tray() {
  return (
    <>
      <Svg w={32} h={18} className="ml-[681px]">
        <path d="M1 17L16 2L31 17" stroke="#fff" strokeWidth="2.200" />
      </Svg>
      <Svg w={40} h={40} className="mt-[2px] ml-[45px]">
        <path fill="#fff" d="M11 1L20 7L11 13L2 7ZM28 1L37 7L28 13L19 7ZM11 14L20 20L11 27L2 20ZM28 14L37 20L28 26L19 20ZM19 24L27 30L19 37L9 30Z" />
        <circle cx="29" cy="29" r="9.500" fill="#2fb34a" />
        <path d="M24.500 29L28 33L34 25" stroke="#fff" strokeWidth="2" />
      </Svg>
      <Svg w={42} h={28} className="mb-[2px] ml-[38px]">
        <path d="M16 6.500H37V26H12M3.500 0V6M9.500 0V6M1 6.500H12V12Q12 16 6.500 16Q1 16 1 12ZM6.500 16V27" stroke="#fff" strokeWidth="2" />
        <rect x="38" y="11" width="3" height="10" fill="#fff" />
      </Svg>
      <Svg w={31} h={31} className="mt-[2px] ml-[45px]">
        <path d="M1 30Q2 4 30 1.500M9 30Q10 12 30 9.500M17 30Q18 20 30 17.500" stroke="#fff" strokeWidth="1.800" />
        <circle cx="27" cy="27" r="3.200" fill="#fff" />
      </Svg>
      <Svg w={42} h={36} className="ml-[43px]">
        <path d="M1 11H6L14 2V34L6 25H1ZM21 12Q25 18 21 24M26 6Q33 18 26 30M32 1Q43 18 32 35" stroke="#fff" strokeWidth="1.700" />
      </Svg>
      <Svg w={40} h={35} className="ml-[38px]">
        <path fill="#169c5a" d="M12 0L20 10L7 34L0 23Z" />
        <path fill="#fdc93b" d="M12 0H27L40 23H26Z" />
        <path fill="#3b7ae9" d="M14 23H40L34 35H6Z" />
      </Svg>
      <Svg w={40} h={40} className="ml-[40px]">
        <path fill="#fff" d="M0 0H40V34H26L20 40L14 34H0Z" />
        <path d="M8 9H32M8 17H32M8 25H24" stroke="#002137" strokeWidth="2" />
      </Svg>
      <Svg w={69} h={39} className="ml-[35px]">
        <rect x="1.250" y="1.250" width="66.500" height="36.500" rx="1.500" stroke="#fff" strokeWidth="2.500" />
        <path d="M9 10.500H61" stroke="#fff" strokeWidth="3" strokeDasharray="3 3" />
        <path d="M9 19.500H18M20 19.500H49M51 19.500H60" stroke="#fff" strokeWidth="3" strokeDasharray="4 2" />
        <path d="M9 28.500H18M21 28.500H48M51 28.500H60" stroke="#fff" strokeWidth="3" />
      </Svg>
      <div className="ml-[30px] flex flex-col items-center pb-[3px] text-[29px] leading-[42px] text-white">
        <T w={124}>12:16 AM</T>
        <T w={138}>9/15/2016</T>
      </div>
      <div className="ml-auto h-full w-[2px] bg-[#667a88]" />
      <div className="w-[11px]" />
    </>
  );
}

function Taskbar() {
  return (
    <div className="flex h-[100px] shrink-0 items-center bg-[#002137]">
      <div className="flex h-full w-[120px] shrink-0 items-center justify-center">
        <Svg w={40} h={40}>
          <path fill="#fff" d="M0 5.700L16.500 3.300V18.500H0ZM18 3L40 0V18.500H18ZM0 20.500H16.500V36.700L0 34.300ZM18 20.500H40V40L18 37Z" />
        </Svg>
      </div>
      <div className="flex h-full w-[860px] shrink-0 items-center bg-[#345268] pt-[3px] pl-[30px] text-[36px] leading-[50px] text-[#9dabb6]">
        <T w={486}>Search the web and Windows</T>
      </div>
      {apps.map((app) => (
        <div key={app.name} className="flex h-full w-[124px] shrink-0 flex-col items-center">
          <div className="flex h-[95px] items-center pt-[5px]">
            <AppIcon name={app.name} />
          </div>
          {app.open && <div className="h-[5px] w-[101px] bg-[#9ac8ee]" />}
          {app.name === "explorer" && (
            <div className="flex h-[5px] w-[101px] bg-[#7a9ebc]">
              <div className="h-[5px] w-[78px] bg-[#9ac8ee]" />
              <div className="h-[5px] w-[3px] bg-[#57768e]" />
            </div>
          )}
        </div>
      ))}
      <div className="ml-[2px] flex h-full w-[122px] shrink-0">
        <div className="flex h-full w-[110px] flex-col items-center bg-[#004e88]">
          <div className="flex h-[95px] items-center pt-[5px] pl-[10px]">
            <AppIcon name="visio" />
          </div>
          <div className="h-[5px] w-full bg-[#9ac8ee]" />
        </div>
        <div className="flex h-full w-[3px] flex-col justify-end bg-[#0a3a66]">
          <div className="h-[5px] bg-[#57768e]" />
        </div>
        <div className="flex h-full w-[8px] flex-col justify-end bg-[#003d6b]">
          <div className="h-[5px] bg-[#7a9ebc]" />
        </div>
      </div>
      <Tray />
    </div>
  );
}

export default function App() {
  return (
    <div className="flex h-[2160px] w-[3840px] flex-col overflow-hidden bg-[#ebebeb] font-['Open_Sans','Noto_Sans',sans-serif]">
      <Header />
      <div className="flex h-[1818px] shrink-0">
        <ShapesPanel />
        <DrawingWindow />
        <div className="w-[16px] bg-[#3955a3]" />
      </div>
      <StatusBar />
      <Taskbar />
    </div>
  );
}
